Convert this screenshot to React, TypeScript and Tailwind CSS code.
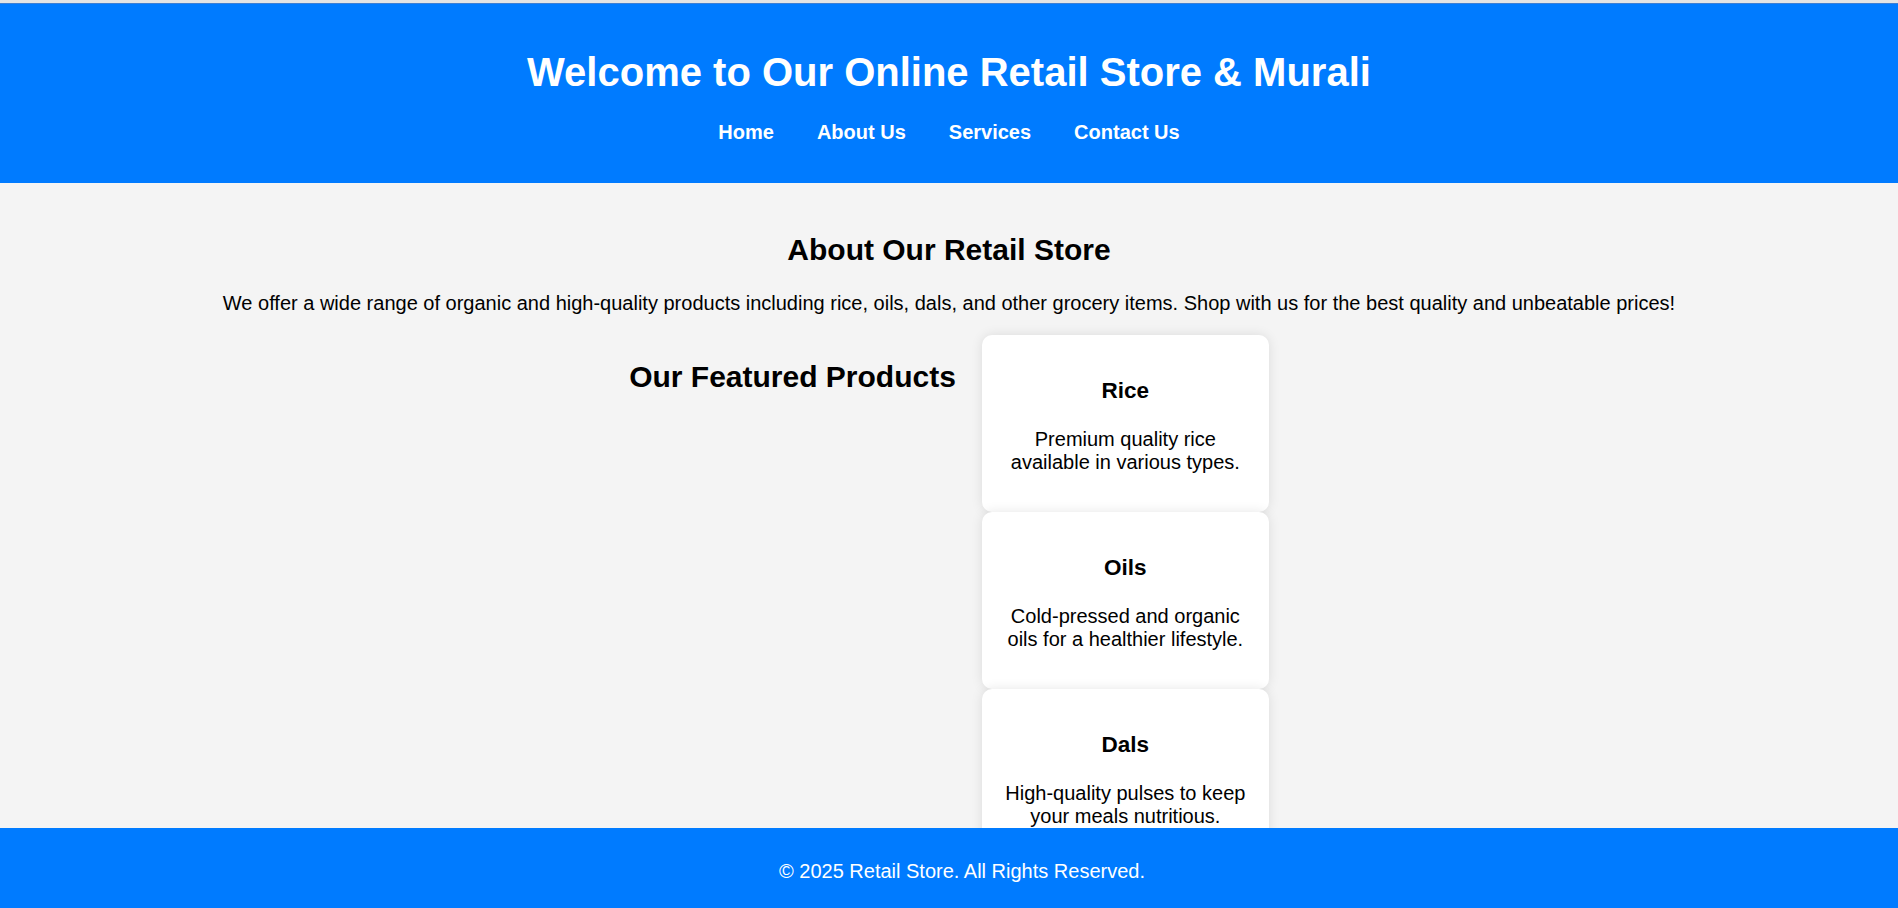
import React from 'react';

// ============================================
// Données
// ============================================

const navLinks = ['Home', 'About Us', 'Services', 'Contact Us'];

const products = [
  { name: 'Rice', text: 'Premium quality rice available in various types.' },
  { name: 'Oils', text: 'Cold-pressed and organic oils for a healthier lifestyle.' },
  { name: 'Dals', text: 'High-quality pulses to keep your meals nutritious.' },
];

// ============================================
// Carte produit
// ============================================

function ProductCard({ name, text }: { name: string; text: string }) {
  return (
    <div className="w-[287px] h-[177px] bg-white rounded-[10px] shadow-[0_0_12px_rgba(0,0,0,0.1)] px-[19px] pt-[19px] text-center overflow-hidden">
      <h3 className="mt-[24px] mb-[24px] text-[22.5px] leading-[26px] font-bold">{name}</h3>
      <p className="text-[20px] leading-[23px]">{text}</p>
    </div>
  );
}

// ============================================
// Page
// ============================================

export default function App() {
  return (
    <div
      className="min-h-screen bg-[#f4f4f4] text-black"
      style={{ fontFamily: '"Liberation Sans", Arial, sans-serif' }}
    >
      {/* Bord supérieur */}
      <div className="h-[3px] bg-[#e4e4e4]" />
      <div className="h-[1px] bg-[#3d7fd4]" />

      {/* Header */}
      <header className="bg-[#007bff] text-white text-center pt-[18px] pb-[39px]">
        <h1 className="mt-[27px] mb-[26px] text-[40px] leading-[46px] font-bold">
          Welcome to Our Online Retail Store &amp; Murali
        </h1>
        <nav className="flex justify-center gap-[43px] text-[20px] leading-[23px] font-bold">
          {navLinks.map((link) => (
            <a key={link} href="#" className="text-white">
              {link}
            </a>
          ))}
        </nav>
      </header>

      {/* Contenu */}
      <main className="pt-[49px] pb-[120px] text-center">
        <h2 className="text-[30px] leading-[35px] font-bold">About Our Retail Store</h2>
        <p className="mt-[25px] text-[20px] leading-[23px]">
          We offer a wide range of organic and high-quality products including rice, oils, dals, and other grocery
          items. Shop with us for the best quality and unbeatable prices!
        </p>

        {/* Produits */}
        <div className="mt-[20px] flex justify-center items-start gap-[26px]">
          <h2 className="mt-[24px] text-[30px] leading-[35px] font-bold">Our Featured Products</h2>
          <div className="flex flex-col">
            {products.map((p) => (
              <ProductCard key={p.name} name={p.name} text={p.text} />
            ))}
          </div>
        </div>
      </main>

      {/* Footer */}
      <footer className="fixed bottom-0 left-0 w-full h-[80px] bg-[#007bff] text-white text-center pt-[32px] pl-[26px]">
        <p className="text-[20px] leading-[23px]">© 2025 Retail Store. All Rights Reserved.</p>
      </footer>
    </div>
  );
}
